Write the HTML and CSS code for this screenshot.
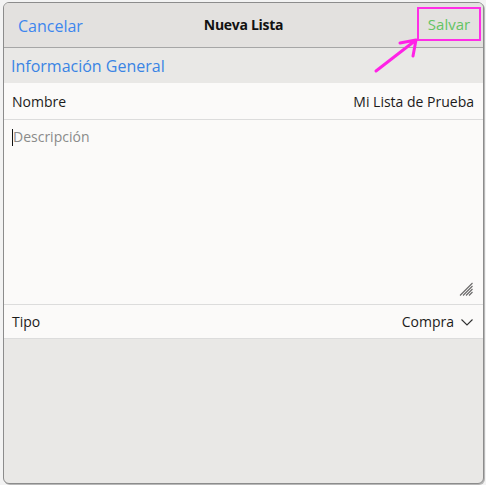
FILE: index.html
```html
<!DOCTYPE html>
<html lang="es">
<head>
<meta charset="utf-8">
<title>Nueva Lista</title>
<link rel="stylesheet" href="styles.css">
</head>
<body>
<div class="dialog">
  <header class="bar">
    <button class="link cancel">Cancelar</button>
    <h1 class="title">Nueva Lista</h1>
    <button class="link save">Salvar</button>
    <svg class="arrow" width="50" height="42" viewBox="0 0 50 42">
      <path d="M4 36 L44 5 M28 8 L44 5 L41 21" fill="none" stroke="#ff22e6" stroke-width="3" stroke-linecap="round" stroke-linejoin="round"/>
    </svg>
  </header>
  <div class="section">Información General</div>
  <div class="row">
    <span class="label">Nombre</span>
    <span class="value">Mi Lista de Prueba</span>
  </div>
  <div class="desc">
    <span class="caret"></span><span class="placeholder">Descripción</span>
    <svg class="grip" width="14" height="14" viewBox="0 0 14 14">
      <path d="M1 13.5 L13.5 1 M4 13.5 L13.5 4 M7 13.5 L13.5 7 M10 13.5 L13.5 10" stroke="#6a6a6a" stroke-width="1.1" fill="none"/>
    </svg>
  </div>
  <div class="row row-tipo">
    <span class="label">Tipo</span>
    <span class="value select">Compra
      <svg class="chev" width="12" height="7" viewBox="0 0 12 7"><path d="M0.5 0.5 L6 6 L11.5 0.5" fill="none" stroke="#333" stroke-width="1.1"/></svg>
    </span>
  </div>
  <div class="fill"></div>
</div>
</body>
</html>
```
FILE: styles.css
```css
* { box-sizing: border-box; }
html, body { margin: 0; height: 100%; }
body {
  background: #f3f3f3;
  padding: 2px 3px 1px 3px;
  font-family: "Open Sans", "Noto Sans", sans-serif;
  color: #1b1b1b;
}
.dialog {
  width: 481px;
  height: 482px;
  border: 1px solid #8c8c8c;
  border-radius: 6px;
  box-shadow: 1px 1px 0 #b8b8b8;
  background: #e9e8e6;
  display: flex;
  flex-direction: column;
  overflow: hidden;
}
.bar {
  position: relative;
  height: 45px;
  flex: none;
  background: #e3e1df;
  border-bottom: 1px solid #a6a6a6;
  display: flex;
  align-items: center;
  justify-content: space-between;
  padding: 0 2px 0 14px;
}
.link {
  background: none;
  border: none;
  font-family: inherit;
  font-size: 16px;
  padding: 0;
  cursor: pointer;
}
.cancel { color: #3d86ee; margin-top: 2px; padding-left: 0; }
.title {
  position: absolute;
  left: 0; right: 0;
  top: 12px;
  margin: 0;
  text-align: center;
  font-size: 14px;
  font-weight: 700;
  color: #111;
  pointer-events: none;
  letter-spacing: -0.3px;
}
.save {
  color: #63c463;
  font-size: 15px;
  border: 2px solid #ff2ee6;
  width: 64px;
  height: 34px;
  margin-top: -2px;
}
.arrow {
  position: absolute;
  left: 368px;
  top: 32px;
}
.section {
  height: 35px;
  flex: none;
  display: flex;
  align-items: center;
  padding-left: 7px;
  color: #3a84e4;
  font-size: 16px;
}
.row {
  flex: none;
  height: 37px;
  background: #fbfaf9;
  border-bottom: 1px solid #dcdcdc;
  display: flex;
  align-items: center;
  justify-content: space-between;
  padding: 0 9px 0 8px;
  font-size: 14px;
}
.row-tipo { height: 34px; }
.desc {
  position: relative;
  flex: none;
  height: 185px;
  background: #fbfaf9;
  border-bottom: 1px solid #dcdcdc;
  padding: 7px 8px;
  font-size: 14px;
  display: flex;
  align-items: flex-start;
}
.caret {
  width: 1px;
  height: 17px;
  background: #111;
  margin-top: 2px;
}
.placeholder { color: #8a8a8a; }
.grip {
  position: absolute;
  right: 10px;
  bottom: 8px;
}
.select { display: flex; align-items: center; gap: 7px; }
.chev { margin-top: 1px; margin-right: 1px; }
.fill { flex: 1; }
```
